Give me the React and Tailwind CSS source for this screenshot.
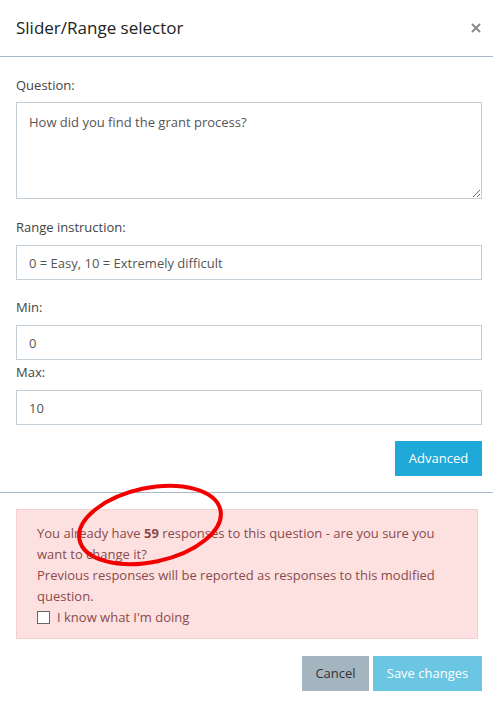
import React, { useState } from 'react';

const font = { fontFamily: '"Open Sans", "Noto Sans", Arial, sans-serif' };

const Field = ({ label, value, className }) => (
  <div className={className}>
    <label className="block text-[13px] leading-[20px] text-[#444]">{label}</label>
    <input
      type="text"
      defaultValue={value}
      className="mt-[8px] block w-full h-[35px] px-[12px] text-[13px] text-[#555] bg-white border border-[#c4ced6] outline-none"
    />
  </div>
);

export default function App() {
  const [checked, setChecked] = useState(false);

  return (
    <div className="relative w-[493px] h-[703px] bg-white text-[#333] overflow-hidden" style={font}>
      {/* Header */}
      <div className="h-[57px] pl-4 pr-[12px] flex items-center justify-between border-b border-[#a9b8c4]">
        <h4 className="text-[17px] text-[#222]">Slider/Range selector</h4>
        <button className="text-[#8a8a8a]">
          <svg width="10" height="10" viewBox="0 0 10 10">
            <path d="M1 1L9 9M9 1L1 9" stroke="currentColor" strokeWidth="2" />
          </svg>
        </button>
      </div>

      {/* Body */}
      <div className="pl-4 pr-[11px] pt-[18px] pb-4 border-b border-[#a9b8c4]">
        <label className="block text-[13px] leading-[20px] text-[#444]">Question:</label>
        <textarea
          defaultValue="How did you find the grant process?"
          className="mt-[7px] block w-full h-[97px] px-[12px] py-[9px] text-[13px] leading-[20px] text-[#555] border border-[#c4ced6] outline-none"
        />
        <Field className="mt-[18px]" label="Range instruction:" value="0 = Easy, 10 = Extremely difficult" />
        <Field className="mt-[17px]" label="Min:" value="0" />
        <Field className="mt-[2px]" label="Max:" value="10" />
        <div className="mt-[16px] flex justify-end">
          <button className="h-[35px] w-[87px] bg-[#1fa9d8] text-white text-[13px]">Advanced</button>
        </div>
      </div>

      {/* Footer */}
      <div className="pl-4 pr-[11px] pt-[16px]">
        <div className="w-[462px] bg-[#fde0e0] border border-[#f8cfcf] pl-[20px] pr-4 pt-[13px] pb-[10px] text-[13px] leading-[21px] text-[#8b4b4d]">
          <p>
            You already have <b className="font-bold">59</b> responses to this question - are you sure you want to change it?
          </p>
          <p>Previous responses will be reported as responses to this modified question.</p>
          <label className="flex items-center gap-[7px]">
            <input
              type="checkbox"
              checked={checked}
              onChange={(e) => setChecked(e.target.checked)}
              className="appearance-none w-[13px] h-[13px] bg-white border border-[#666] checked:bg-[#1fa9d8]"
            />
            I know what I'm doing
          </label>
        </div>
        <div className="mt-[17px] flex justify-end gap-[4px]">
          <button className="h-[35px] w-[67px] bg-[#a4b5bf] text-[#333] text-[13px]">Cancel</button>
          <button className="h-[35px] w-[109px] bg-[#6bc6e3] text-white text-[13px]">Save changes</button>
        </div>
      </div>

      {/* Red annotation circle */}
      <svg className="absolute left-0 top-0 pointer-events-none" width="493" height="703">
        <ellipse cx="150" cy="525" rx="72" ry="37" transform="rotate(-12 150 525)" fill="none" stroke="#f20000" strokeWidth="4" />
      </svg>
    </div>
  );
}
